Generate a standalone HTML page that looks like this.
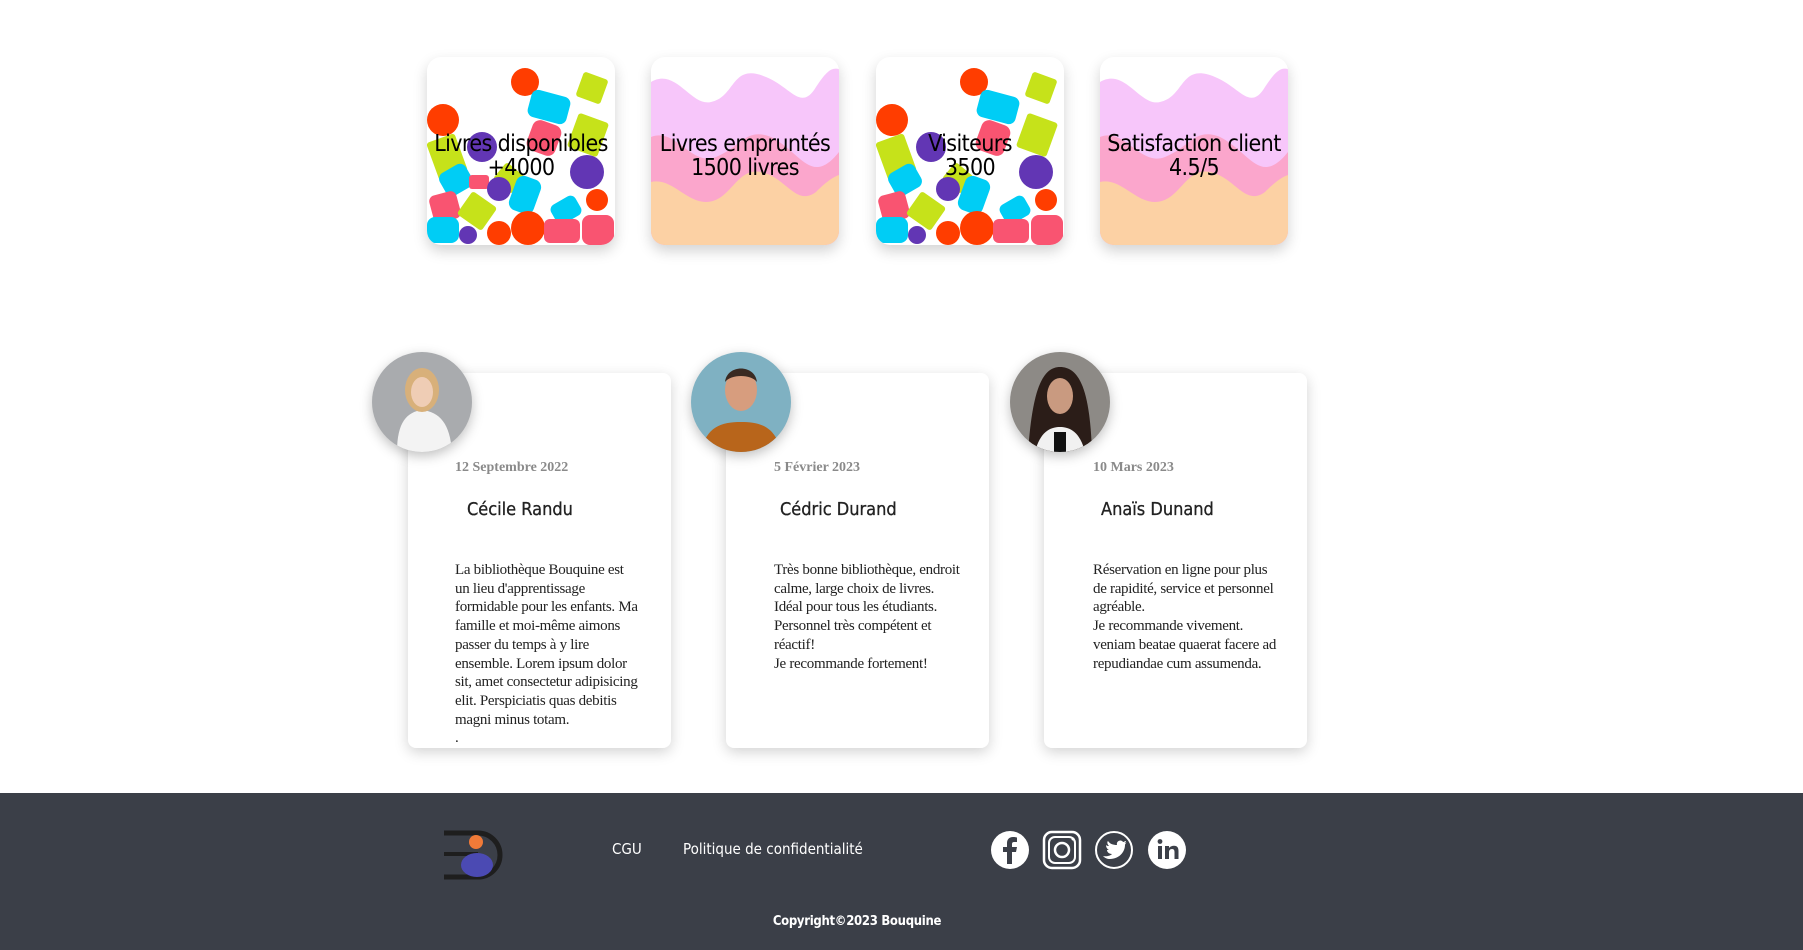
<!DOCTYPE html>
<html><head><meta charset="utf-8"><style>
*{margin:0;padding:0;box-sizing:border-box}
body{width:1803px;height:950px;background:#fff;position:relative;overflow:hidden;font-family:"Liberation Sans",sans-serif}
.stat{position:absolute;top:57px;width:188px;height:188px;border-radius:14px;overflow:hidden;box-shadow:0 6px 14px rgba(0,0,0,.18);background:#fff}
.stat svg{position:absolute;left:0;top:0}
.stat .t{position:absolute;left:-10px;right:-10px;top:99px;transform:translateY(-50%);text-align:center;font-size:23px;line-height:24px;color:#000;font-family:"DejaVu Sans Condensed","Liberation Sans",sans-serif;letter-spacing:-.6px}
.card{position:absolute;top:373px;width:263px;height:375px;background:#fff;border-radius:8px;box-shadow:0 4px 14px rgba(0,0,0,.18)}
.av{position:absolute;top:352px;width:100px;height:100px;border-radius:50%;overflow:hidden;box-shadow:0 4px 12px rgba(0,0,0,.25)}
.date{position:absolute;top:460px;font:bold 14px "Liberation Serif",serif;color:#8a8a8a}
.name{position:absolute;top:499px;font-size:18px;color:#222;font-family:"DejaVu Sans Condensed","Liberation Sans",sans-serif;-webkit-text-stroke:.3px #222}
.txt{position:absolute;top:561px;font:15px/18.7px "Liberation Serif",serif;color:#222;letter-spacing:-.3px;white-space:nowrap}
footer{position:absolute;left:0;top:793px;width:1803px;height:157px;background:#3b3f48}
.fl{position:absolute;color:#fff;font-size:15px;font-family:"DejaVu Sans Condensed","Liberation Sans",sans-serif}
</style></head><body>

<div class="stat" style="left:427px">
<svg width="188" height="188" viewBox="0 0 188 188">
<circle cx="98" cy="25" r="14" fill="#ff3d00"/>
<rect x="152" y="18" width="26" height="26" rx="3" fill="#c6e21a" transform="rotate(20 165 31)"/>
<rect x="102" y="36" width="40" height="28" rx="7" fill="#00cdf5" transform="rotate(15 122 50)"/>
<circle cx="16" cy="63" r="16" fill="#ff3d00"/>
<rect x="145" y="60" width="32" height="36" rx="3" fill="#c6e21a" transform="rotate(20 161 78)"/>
<rect x="102" y="65" width="30" height="32" rx="8" fill="#f95471" transform="rotate(20 117 81)"/>
<rect x="5" y="80" width="30" height="40" rx="3" fill="#c6e21a" transform="rotate(-20 20 100)"/>
<circle cx="55" cy="90" r="15" fill="#6236b4"/>
<circle cx="160" cy="115" r="17" fill="#6236b4"/>
<rect x="14" y="110" width="30" height="26" rx="7" fill="#00cdf5" transform="rotate(-30 29 123)"/>
<rect x="42" y="118" width="20" height="14" rx="3" fill="#f95471"/>
<rect x="70" y="110" width="24" height="22" rx="3" fill="#c6e21a" transform="rotate(40 82 121)"/>
<circle cx="72" cy="132" r="12" fill="#6236b4"/>
<rect x="85" y="120" width="26" height="36" rx="8" fill="#00cdf5" transform="rotate(20 98 138)"/>
<rect x="4" y="136" width="28" height="28" rx="6" fill="#f95471" transform="rotate(-15 18 150)"/>
<rect x="35" y="140" width="30" height="28" rx="3" fill="#c6e21a" transform="rotate(35 50 154)"/>
<rect x="125" y="142" width="28" height="22" rx="6" fill="#00cdf5" transform="rotate(-30 139 153)"/>
<circle cx="170" cy="143" r="11" fill="#ff3d00"/>
<rect x="0" y="160" width="32" height="26" rx="8" fill="#00cdf5"/>
<circle cx="41" cy="178" r="9" fill="#6236b4"/>
<circle cx="72" cy="176" r="12" fill="#ff3d00"/>
<circle cx="101" cy="171" r="17" fill="#ff3d00"/>
<rect x="117" y="162" width="36" height="24" rx="6" fill="#f95471"/>
<rect x="155" y="158" width="32" height="30" rx="8" fill="#f95471"/>
</svg>
<div class="t">Livres disponibles<br>+4000</div></div>

<div class="stat" style="left:651px">
<svg width="188" height="188" viewBox="0 0 188 188">
<path d="M0 25 C25 10 40 50 60 45 C85 40 80 5 115 20 C140 30 150 55 165 30 C175 15 180 10 188 12 L188 188 L0 188Z" fill="#f7c6fa"/>
<path d="M0 80 C25 70 40 110 65 100 C90 90 95 70 120 80 C150 95 160 130 188 95 L188 188 L0 188Z" fill="#fba6cc"/>
<path d="M0 125 C20 120 35 145 55 145 C80 145 85 110 110 115 C135 120 145 150 165 135 C175 125 182 120 188 118 L188 188 L0 188Z" fill="#fcd1a4"/>
</svg>
<div class="t">Livres empruntés<br>1500 livres</div></div>

<div class="stat" style="left:876px">
<svg width="188" height="188" viewBox="0 0 188 188">
<circle cx="98" cy="25" r="14" fill="#ff3d00"/>
<rect x="152" y="18" width="26" height="26" rx="3" fill="#c6e21a" transform="rotate(20 165 31)"/>
<rect x="102" y="36" width="40" height="28" rx="7" fill="#00cdf5" transform="rotate(15 122 50)"/>
<circle cx="16" cy="63" r="16" fill="#ff3d00"/>
<rect x="145" y="60" width="32" height="36" rx="3" fill="#c6e21a" transform="rotate(20 161 78)"/>
<rect x="102" y="65" width="30" height="32" rx="8" fill="#f95471" transform="rotate(20 117 81)"/>
<rect x="5" y="80" width="30" height="40" rx="3" fill="#c6e21a" transform="rotate(-20 20 100)"/>
<circle cx="55" cy="90" r="15" fill="#6236b4"/>
<circle cx="160" cy="115" r="17" fill="#6236b4"/>
<rect x="14" y="110" width="30" height="26" rx="7" fill="#00cdf5" transform="rotate(-30 29 123)"/>
<rect x="70" y="110" width="24" height="22" rx="3" fill="#c6e21a" transform="rotate(40 82 121)"/>
<circle cx="72" cy="132" r="12" fill="#6236b4"/>
<rect x="85" y="120" width="26" height="36" rx="8" fill="#00cdf5" transform="rotate(20 98 138)"/>
<rect x="4" y="136" width="28" height="28" rx="6" fill="#f95471" transform="rotate(-15 18 150)"/>
<rect x="35" y="140" width="30" height="28" rx="3" fill="#c6e21a" transform="rotate(35 50 154)"/>
<rect x="125" y="142" width="28" height="22" rx="6" fill="#00cdf5" transform="rotate(-30 139 153)"/>
<circle cx="170" cy="143" r="11" fill="#ff3d00"/>
<rect x="0" y="160" width="32" height="26" rx="8" fill="#00cdf5"/>
<circle cx="41" cy="178" r="9" fill="#6236b4"/>
<circle cx="72" cy="176" r="12" fill="#ff3d00"/>
<circle cx="101" cy="171" r="17" fill="#ff3d00"/>
<rect x="117" y="162" width="36" height="24" rx="6" fill="#f95471"/>
<rect x="155" y="158" width="32" height="30" rx="8" fill="#f95471"/>
</svg>
<div class="t">Visiteurs<br>3500</div></div>

<div class="stat" style="left:1100px">
<svg width="188" height="188" viewBox="0 0 188 188">
<path d="M0 25 C25 10 40 50 60 45 C85 40 80 5 115 20 C140 30 150 55 165 30 C175 15 180 10 188 12 L188 188 L0 188Z" fill="#f7c6fa"/>
<path d="M0 80 C25 70 40 110 65 100 C90 90 95 70 120 80 C150 95 160 130 188 95 L188 188 L0 188Z" fill="#fba6cc"/>
<path d="M0 125 C20 120 35 145 55 145 C80 145 85 110 110 115 C135 120 145 150 165 135 C175 125 182 120 188 118 L188 188 L0 188Z" fill="#fcd1a4"/>
</svg>
<div class="t">Satisfaction client<br>4.5/5</div></div>

<div class="card" style="left:408px"></div>
<div class="card" style="left:726px"></div>
<div class="card" style="left:1044px"></div>

<div class="av" style="left:372px;background:#a9abae"><svg width="100" height="100"><path d="M25 100 C25 70 35 60 50 58 C68 60 78 72 80 100Z" fill="#f3f3f3"/><ellipse cx="50" cy="38" rx="17" ry="22" fill="#d8b07a"/><ellipse cx="50" cy="40" rx="11" ry="15" fill="#efcdb5"/></svg></div>
<div class="av" style="left:691px;background:#7fb1c2"><svg width="100" height="100"><path d="M10 100 C15 75 30 70 50 70 C70 70 85 75 90 100Z" fill="#b8651b"/><ellipse cx="50" cy="38" rx="16" ry="21" fill="#d79d7e"/><path d="M34 30 C36 12 64 12 66 30 C60 22 40 22 34 30Z" fill="#3a2a22"/></svg></div>
<div class="av" style="left:1010px;background:#8d8a86"><svg width="100" height="100"><path d="M18 100 C22 45 30 15 50 15 C72 15 80 45 82 100Z" fill="#2b1d18"/><path d="M25 100 C30 80 40 75 50 75 C60 75 70 80 75 100Z" fill="#f1f1f1"/><rect x="44" y="80" width="12" height="20" fill="#111"/><ellipse cx="50" cy="44" rx="13" ry="18" fill="#c99a80"/></svg></div>

<div class="date" style="left:455px">12 Septembre 2022</div>
<div class="date" style="left:774px">5 Février 2023</div>
<div class="date" style="left:1093px">10 Mars 2023</div>
<div class="name" style="left:467px">Cécile Randu</div>
<div class="name" style="left:780px">Cédric Durand</div>
<div class="name" style="left:1101px">Anaïs Dunand</div>
<div class="txt" style="left:455px">La bibliothèque Bouquine est<br>un lieu d'apprentissage<br>formidable pour les enfants. Ma<br>famille et moi-même aimons<br>passer du temps à y lire<br>ensemble. Lorem ipsum dolor<br>sit, amet consectetur adipisicing<br>elit. Perspiciatis quas debitis<br>magni minus totam.<br>.</div>
<div class="txt" style="left:774px">Très bonne bibliothèque, endroit<br>calme, large choix de livres.<br>Idéal pour tous les étudiants.<br>Personnel très compétent et<br>réactif!<br>Je recommande fortement!</div>
<div class="txt" style="left:1093px">Réservation en ligne pour plus<br>de rapidité, service et personnel<br>agréable.<br>Je recommande vivement.<br>veniam beatae quaerat facere ad<br>repudiandae cum assumenda.</div>

<footer>
<svg style="position:absolute;left:444px;top:37px" width="64" height="52" viewBox="0 0 64 52">
<path d="M0 3 H34 A22 22 0 0 1 34 47 H0" fill="none" stroke="#1e1e1e" stroke-width="5"/>
<rect x="0" y="22" width="34" height="4" fill="#1e1e1e"/>
<circle cx="32" cy="12" r="7" fill="#f07a38"/>
<ellipse cx="33" cy="35" rx="16" ry="12" fill="#4b4ab3"/>
</svg>
<div class="fl" style="left:612px;top:47px">CGU</div>
<div class="fl" style="left:683px;top:47px">Politique de confidentialité</div>
<svg style="position:absolute;left:990px;top:37px" width="200" height="40" viewBox="0 0 200 40">
<circle cx="20" cy="20" r="19" fill="#fff"/>
<path d="M22 34 V22 H26 L27 17 H22 V14 C22 12.5 22.8 12 24 12 H27 V7.5 C26 7.3 24.5 7 23 7 C19 7 17 9.5 17 13 V17 H13 V22 H17 V34Z" fill="#3b3f48"/>
<rect x="54" y="2" width="36" height="36" rx="8" fill="none" stroke="#fff" stroke-width="2.5"/>
<rect x="59" y="7" width="26" height="26" rx="6" fill="none" stroke="#fff" stroke-width="2"/>
<circle cx="72" cy="20" r="7" fill="none" stroke="#fff" stroke-width="2.5"/>
<circle cx="83" cy="9" r="1.5" fill="#fff"/>
<circle cx="124" cy="20" r="18" fill="none" stroke="#fff" stroke-width="2"/>
<path d="M113 26 C118 27 121 25 122 24 C119 24 117 22 117 20 C118 20 119 20 119 20 C117 19 116 17 116 15 C117 16 118 16 119 16 C117 14 117 12 118 11 C120 14 123 15 127 15 C126 11 131 9 133 12 C134 12 135 11 136 11 C136 12 135 13 134 13 C135 13 136 13 137 12 C136 13 135 14 135 15 C135 22 129 29 120 29 C117 29 115 28 113 26Z" fill="#fff"/>
<circle cx="177" cy="20" r="19" fill="#fff"/>
<rect x="168" y="16" width="4" height="13" fill="#3b3f48"/>
<circle cx="170" cy="11.5" r="2.4" fill="#3b3f48"/>
<path d="M175 16 H179 V18 C180 16.5 182 15.7 184 15.7 C187.5 15.7 188.5 18 188.5 21 V29 H184.5 V22 C184.5 20.5 184 19 182 19 C180 19 179 20.5 179 22 V29 H175Z" fill="#3b3f48"/>
</svg>
<div class="fl" style="left:0;width:1714px;text-align:center;top:121px;font-size:13px;font-weight:bold;letter-spacing:-.3px">Copyright©2023 Bouquine</div>
</footer>
</body></html>
